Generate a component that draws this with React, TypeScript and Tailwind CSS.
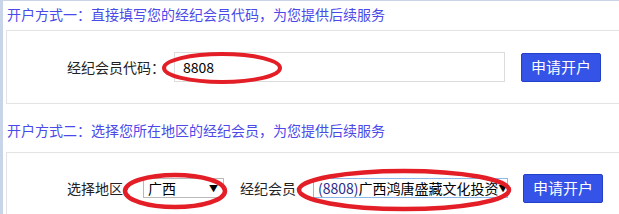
import React from 'react'

const font = { fontFamily: '"Noto Sans CJK SC", "Microsoft YaHei", sans-serif' }

function ApplyButton({ className = '' }: { className?: string }) {
  return (
    <button
      className={`w-[80px] h-[29px] bg-[#3553e6] border border-[#2440c8] rounded-[2px] text-white text-[15px] flex items-center justify-center ${className}`}
    >
      申请开户
    </button>
  )
}

function FakeSelect({ width, focus, children }: { width: string; focus?: boolean; children: React.ReactNode }) {
  return (
    <div
      className={`${width} h-[20px] bg-white border ${focus ? 'border-[#8db8ea]' : 'border-[#b9b9b9]'} flex items-center justify-between pl-[4px] pr-[5px] text-[14px] text-black`}
    >
      <span className="whitespace-nowrap">{children}</span>
      <span className="text-[9px] leading-none">▼</span>
    </div>
  )
}

export default function App() {
  return (
    <div
      className="relative w-[619px] h-[214px] overflow-hidden bg-white border-l-[3px] border-t border-[#c9d4e8]"
      style={font}
    >
      <div className="h-[29px] flex items-center pl-[4px] pb-[2px] text-[14px] text-[#4b4ae8]">
        开户方式一：直接填写您的经纪会员代码，为您提供后续服务
      </div>

      <div className="ml-[3px] h-[74px] border border-r-0 border-[#e4e4e4] flex items-center">
        <span className="ml-[60px] w-[104px] text-[14px] text-[#222]">经纪会员代码：</span>
        <div className="w-[331px] h-[30px] border border-[#dcdcdc] ml-[3px] flex items-center pl-[8px] text-[14px] text-black">
          8808
        </div>
        <ApplyButton className="ml-[16px]" />
      </div>

      <div className="h-[48px] flex items-end pb-[11px] pl-[4px] text-[14px] text-[#4b4ae8]">
        开户方式二：选择您所在地区的经纪会员，为您提供后续服务
      </div>

      <div className="ml-[3px] h-[80px] border border-r-0 border-b-0 border-[#e4e4e4] flex items-start pt-[20px]">
        <div className="flex items-center h-[30px]">
          <span className="ml-[60px] text-[14px] text-[#222]">选择地区</span>
          <div className="ml-[20px]">
            <FakeSelect width="w-[81px]">广西</FakeSelect>
          </div>
          <span className="ml-[16px] text-[14px] text-[#222]">经纪会员</span>
          <div className="ml-[17px]">
            <FakeSelect width="w-[195px]" focus>
              <span className="text-[#2b2b8a]">(8808)</span>广西鸿唐盛藏文化投资
            </FakeSelect>
          </div>
          <ApplyButton className="ml-[15px]" />
        </div>
      </div>

      <svg className="absolute left-[-3px] top-[-1px] pointer-events-none" width="619" height="214" viewBox="0 0 619 214">
        <ellipse cx="222" cy="68" rx="58" ry="14" fill="none" stroke="#e41e26" strokeWidth="4" />
        <ellipse cx="175" cy="191" rx="50" ry="16" fill="none" stroke="#e41e26" strokeWidth="4.5" />
        <ellipse cx="404" cy="190" rx="105" ry="19" fill="none" stroke="#e41e26" strokeWidth="4.5" />
      </svg>
    </div>
  )
}
